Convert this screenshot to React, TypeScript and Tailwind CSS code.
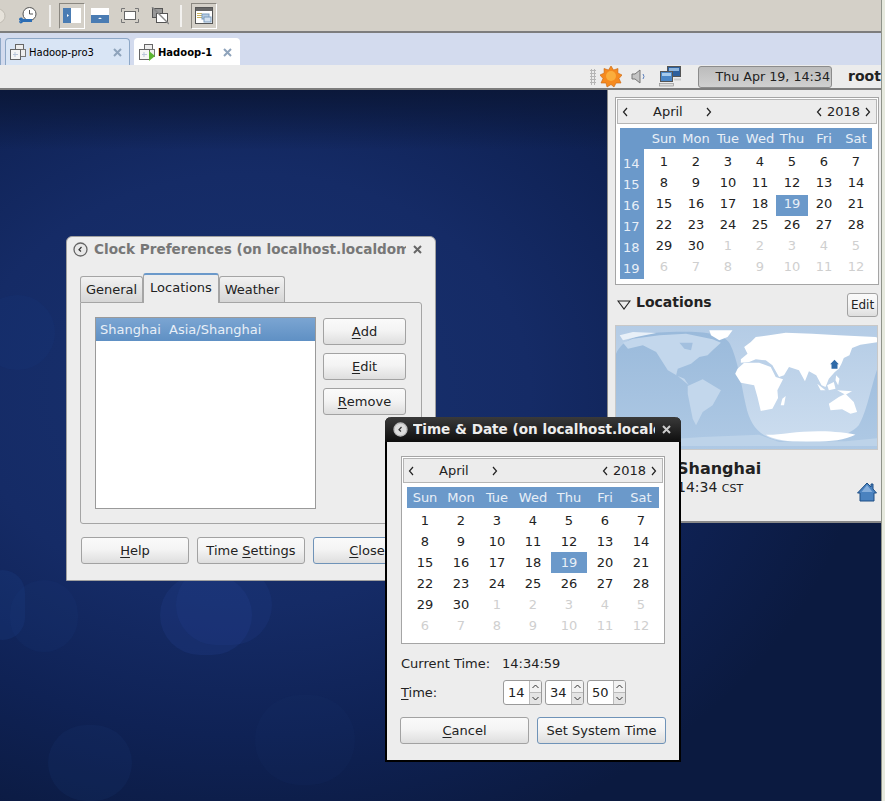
const F = "font-['DejaVu_Sans',sans-serif]";
const weeks = [
  [["1",0],["2",0],["3",0],["4",0],["5",0],["6",0],["7",0]],
  [["8",0],["9",0],["10",0],["11",0],["12",0],["13",0],["14",0]],
  [["15",0],["16",0],["17",0],["18",0],["19",2],["20",0],["21",0]],
  [["22",0],["23",0],["24",0],["25",0],["26",0],["27",0],["28",0]],
  [["29",0],["30",0],["1",1],["2",1],["3",1],["4",1],["5",1]],
  [["6",1],["7",1],["8",1],["9",1],["10",1],["11",1],["12",1]],
] as [string, number][][];
const days = ["Sun","Mon","Tue","Wed","Thu","Fri","Sat"];
const wk = ["14","15","16","17","18","19"];

function U({ children }: { children: string }) {
  return <span className="underline underline-offset-2">{children}</span>;
}

function Chev({ left }: { left?: boolean }) {
  return (
    <svg width="7" height="10" viewBox="0 0 7 10" className="shrink-0">
      <path d={left ? "M5 1 L1.5 5 L5 9" : "M2 1 L5.5 5 L2 9"} fill="none" stroke="#222" strokeWidth="1.2" />
    </svg>
  );
}

function CalHeader() {
  return (
    <div className="flex h-[25px] items-center border border-[#b5b5b5] bg-[#ececec] text-[13px] text-[#222]">
      <div className="ml-[4px]"><Chev left /></div>
      <span className="ml-[24px] w-[52px]">April</span>
      <Chev />
      <div className="ml-auto mr-[5px] flex items-center gap-[4px]">
        <Chev left />
        <span>2018</span>
        <Chev />
      </div>
    </div>
  );
}

function Calendar({ numbers }: { numbers?: boolean }) {
  const cell = numbers ? "w-[32px]" : "w-[36px]";
  return (
    <div className="border border-[#a5a5a5] bg-white p-px">
      <CalHeader />
      <div className={`flex flex-col pt-[4px] ${numbers ? "pl-[3px] pb-[4px]" : "pl-[4px] pb-[6px]"} text-[13px]`}>
        <div className={`flex h-[21px] items-center bg-[#6b99ca] text-[#e8eff7] ${numbers ? "w-[252px]" : "w-[252px]"}`}>
          {numbers && <div className="w-[28px]" />}
          {days.map((d) => <div key={d} className={`${cell} text-center`}>{d}</div>)}
        </div>
        {numbers ? <div className="h-[4px] w-[24px] bg-[#6b99ca]" /> : <div className="h-[2px]" />}
        {weeks.map((w, i) => (
          <div key={i} className="flex h-[21px] items-center">
            {numbers && (
              <div className="mr-[4px] flex h-full w-[24px] items-center bg-[#6b99ca] pl-[3px] text-[#e8eff7]">{wk[i]}</div>
            )}
            {w.map(([t, k], j) => (
              <div key={j} className={`${cell} flex h-full items-center justify-center ${numbers ? "pb-[4px]" : ""} ${k === 2 ? "bg-[#6b99ca] text-[#e8eff7]" : k === 1 ? "text-[#cfcfcf]" : "text-[#222]"}`}>{t}</div>
            ))}
          </div>
        ))}
      </div>
    </div>
  );
}

function Btn({ className = "", focus, small, children }: { className?: string; focus?: boolean; small?: boolean; children: React.ReactNode }) {
  return (
    <div className={`flex items-center justify-center rounded-[3px] border ${small ? "h-[24px] text-[12px]" : "h-[27px] text-[13px]"} ${focus ? "border-[#6f93b8]" : "border-[#a2a2a2]"} bg-[linear-gradient(#fafafa,#f4f4f4_45%,#dedede)] text-[#222] ${className}`}>
      {children}
    </div>
  );
}

function ClockGlyph({ dark, className = "" }: { dark?: boolean; className?: string }) {
  return (
    <svg width="15" height="15" viewBox="0 0 15 15" className={`shrink-0 ${className}`}>
      <circle cx="7.500" cy="7.500" r="6.500" fill={dark ? "#ddd" : "#e8e8e8"} stroke={dark ? "#bbb" : "#666"} strokeWidth="1.300" />
      <path d="M8.500 5 L6 7.800 L8 9.500" fill="none" stroke="#333" strokeWidth="1.200" />
    </svg>
  );
}

function ToolIcon({ kind }: { kind: string }) {
  if (kind === "left") return (
    <svg width="18" height="15" viewBox="0 0 18 15"><rect width="18" height="15" fill="#fff" /><rect width="8" height="15" fill="#4a7cb3" /><path d="M4 6 l2 1.500 -2 1.500z" fill="#fff" /></svg>
  );
  if (kind === "bottom") return (
    <svg width="18" height="15" viewBox="0 0 18 15"><rect width="18" height="15" fill="#fff" /><rect y="7" width="18" height="8" fill="#4a7cb3" /><path d="M7 11 h4 l-2 -1.500z" fill="#fff" /></svg>
  );
  if (kind === "full") return (
    <svg width="18" height="15" viewBox="0 0 18 15">
      <rect x="3.500" y="3.500" width="11" height="8" fill="#fff" stroke="#666" />
      <path d="M0.500 4 V0.500 H4 M14 0.500 H17.500 V4 M0.500 11 V14.500 H4 M14 14.500 H17.500 V11" fill="none" stroke="#777" />
    </svg>
  );
  if (kind === "off") return (
    <svg width="18" height="18" viewBox="0 0 18 18">
      <rect x="1.500" y="1.500" width="10" height="9" fill="#999" stroke="#555" />
      <rect x="5.500" y="6.500" width="11" height="9" fill="#fff" stroke="#555" />
      <path d="M1 0 L18 17" stroke="#888" strokeWidth="1.500" />
    </svg>
  );
  return (
    <svg width="18" height="17" viewBox="0 0 18 17">
      <rect x="0.500" y="0.500" width="17" height="16" fill="#fff" stroke="#555" />
      <rect x="1" y="1" width="16" height="3" fill="#666" />
      <rect x="2" y="6" width="5" height="1" fill="#c9b35e" /><rect x="2" y="8" width="5" height="1" fill="#c9b35e" /><rect x="2" y="10" width="5" height="1" fill="#c9b35e" />
      <rect x="7" y="7" width="7" height="5" fill="#b7cde3" stroke="#7a9bbd" /><rect x="9" y="10" width="7" height="5" fill="#d5e2ef" stroke="#7a9bbd" />
    </svg>
  );
}

function VmIcon({ run }: { run?: boolean }) {
  return (
    <svg width="17" height="17" viewBox="0 0 17 17">
      <rect x="5.500" y="0.500" width="8" height="8" fill="#eee" stroke="#666" />
      <rect x="9.500" y="5.500" width="6" height="7" fill="#eee" stroke="#777" />
      <rect x="0.500" y="5.500" width="10" height="10" fill="#f6f6f6" stroke="#666" />
      <path d="M5 8v5M3 10.500h5" stroke="#b9c6da" />
      {run && <path d="M10 7 L16 12 L10 17z" fill="#5cb531" />}
    </svg>
  );
}

function Close({ className = "" }: { className?: string }) {
  return (
    <svg width="9" height="9" viewBox="0 0 9 9" className={className}>
      <path d="M1 1 L8 8 M8 1 L1 8" stroke="#8ea3bb" strokeWidth="2" />
    </svg>
  );
}

function Tab({ active, label, w }: { active?: boolean; label: string; w: string }) {
  return (
    <div className={`flex h-[27px] items-center rounded-t-[4px] border border-b-0 ${w} ${active ? "border-[#fff] bg-white font-bold" : "border-[#8da7c6] bg-[#d9e5f5]"}`}>
      <div className="ml-[4px]"><VmIcon run={active} /></div>
      <span className="ml-[2px] text-[10px] text-black">{label}</span>
      <Close className="ml-auto mr-[7px]" />
    </div>
  );
}

function WorldMap() {
  return (
    <svg width="261" height="123" viewBox="9 12 786 369" preserveAspectRatio="none" className="block">
      <defs>
        <linearGradient id="day" x1="0" y1="0" x2="0" y2="1"><stop offset="0" stopColor="#b3cbe5" /><stop offset="1" stopColor="#cfdff0" /></linearGradient>
        <linearGradient id="night" x1="0" y1="0" x2="0" y2="1"><stop offset="0" stopColor="#9abadb" /><stop offset="1" stopColor="#b0cae5" /></linearGradient>
      </defs>
      <rect x="0" y="0" width="800" height="400" fill="url(#day)" />
      <path d="M9 400 V95 C30 50 80 32 170 30 C260 28 330 30 352 65 C375 110 385 180 400 250 C415 320 450 352 520 358 C600 364 700 355 740 310 C765 270 780 180 800 130 V400 Z" fill="url(#night)" />
      <path d="M170 352 L270 345 L440 338 L500 360 L700 358 L800 348 V372 H170Z" fill="#bdd3e9" />
      <path d="M30 62 L60 50 L140 40 L220 35 L300 52 L325 62 L300 85 L285 100 L260 105 L235 125 L195 140 L190 160 L215 170 L228 190 L195 162 L165 145 L130 90 L90 70 L45 80Z" fill="#c3d7ec" />
      <path d="M200 62 L240 62 L235 85 L215 80Z" fill="#a3c0df" />
      <path d="M225 192 L270 172 L325 205 L300 250 L270 270 L250 310 L240 290 L225 215Z" fill="#c3d7ec" />
      <path d="M290 25 H360 L345 45 L320 55 L295 40Z" fill="#fff" />
      <path d="M20 40 L60 30 L130 33 L70 45 L30 55Z" fill="#e8f0f8" />
      <path d="M385 112 L405 95 L395 75 L415 60 L430 45 L470 40 L520 32 L600 35 L680 40 L790 45 L800 48 V60 L745 68 L720 78 L712 100 L695 108 L688 125 L680 140 L668 150 L650 170 L640 195 L628 190 L612 160 L590 148 L578 178 L560 145 L530 135 L515 160 L500 165 L480 130 L460 115 L430 112 L410 120 L385 122Z" fill="#fff" />
      <path d="M375 140 L395 122 L440 122 L475 135 L490 165 L512 172 L495 205 L497 228 L480 260 L445 267 L435 225 L425 190 L385 182 L368 155Z" fill="#fff" />
      <path d="M650 245 L680 225 L700 215 L725 240 L735 270 L715 275 L690 262 L655 265Z" fill="#fff" />
      <path d="M645 190 L665 180 L670 200 L650 205Z M615 185 L640 205 L625 205Z M675 205 L720 208 L700 218Z M672 160 L682 170 L678 190 L670 175Z" fill="#fff" />
      <path d="M510 230 L520 222 L515 250 L505 250Z" fill="#fff" />
      <path d="M460 338 C500 340 560 325 640 328 C680 330 720 335 730 338 C690 358 640 360 560 358 C510 358 480 350 460 338Z" fill="#fff" />
      <path d="M667 113 L680 127 L676 127 L676 140 L658 140 L658 127 L654 127Z" fill="#2f6aa8" />
    </svg>
  );
}

function HomeIcon() {
  return (
    <svg width="20" height="20" viewBox="0 0 20 20">
      <path d="M10 1 L14 5 V2 H16 V7 L19.500 11 H17 V19 H3 V11 H0.500z" fill="#4a82bf" stroke="#1f4f85" strokeWidth="1" />
      <path d="M10 3 L4.500 10 H15.500z" fill="#86aedb" />
    </svg>
  );
}

function Spin({ v }: { v: string }) {
  return (
    <div className="flex h-[25px] w-[39px] items-center overflow-hidden rounded-[3px] border border-[#9a9a9a] bg-white text-[13px] text-[#222]">
      <span className="w-[25px] pl-[4px]">{v}</span>
      <div className="flex h-full flex-1 flex-col border-l border-[#bbb] bg-[#e4e4e4]">
        <div className="flex flex-1 items-center justify-center border-b border-[#bbb] bg-[#f2f2f2]">
          <svg width="7" height="5" viewBox="0 0 7 5"><path d="M0.500 4 L3.500 1 L6.500 4" fill="none" stroke="#333" /></svg>
        </div>
        <div className="flex flex-1 items-center justify-center">
          <svg width="7" height="5" viewBox="0 0 7 5"><path d="M0.500 1 L3.500 4 L6.500 1" fill="none" stroke="#333" /></svg>
        </div>
      </div>
    </div>
  );
}

function Bokeh({ c }: { c: string }) {
  return <div className={`absolute rounded-full ${c}`} />;
}

export default function App() {
  return (
    <div className={`relative flex h-[801px] w-[885px] flex-col overflow-hidden ${F}`}>
      {/* VMware toolbar */}
      <div className="flex h-[33px] shrink-0 items-center border-b-2 border-[#7d7d7d] bg-[#d4d0c8]">
        <svg width="6" height="16" viewBox="0 0 6 16" className="mr-[12px]"><circle cx="-2" cy="8" r="7" fill="#e6e2da" stroke="#bfbbb2" /></svg>
        <svg width="20" height="20" viewBox="0 0 20 20">
          <circle cx="11.500" cy="8" r="6.500" fill="#fff" stroke="#555" />
          <path d="M11.500 4 V8 H15" stroke="#555" fill="none" />
          <path d="M1 14 C1 11 4 11 5 13 H14 V16 H5 C4 18 1 18 1 15 L3 15.500z" fill="#2c6db4" />
        </svg>
        <div className="ml-[11px] mr-[8px] h-[22px] w-[2px] bg-white/70" />
        <div className="flex h-[26px] w-[26px] items-center justify-center border border-t-[#8a8780] border-l-[#8a8780] border-r-white border-b-white"><ToolIcon kind="left" /></div>
        <div className="flex w-[30px] items-center justify-center"><ToolIcon kind="bottom" /></div>
        <div className="flex w-[30px] items-center justify-center"><ToolIcon kind="full" /></div>
        <div className="flex w-[30px] items-center justify-center"><ToolIcon kind="off" /></div>
        <div className="ml-[5px] mr-[9px] h-[22px] w-[2px] bg-white/70" />
        <div className="flex h-[26px] w-[26px] items-center justify-center border border-t-[#8a8780] border-l-[#8a8780] border-r-white border-b-white"><ToolIcon kind="win" /></div>
      </div>
      {/* Tabs */}
      <div className="flex h-[32px] shrink-0 items-end gap-[4px] bg-[#d3dbee]">
        <div className="h-[27px] w-px border-r border-[#8da7c6]" />
        <Tab label="Hadoop-pro3" w="w-[125px]" />
        <Tab active label="Hadoop-1" w="w-[106px]" />
      </div>
      {/* Guest panel */}
      <div className="flex h-[25px] shrink-0 items-center border-b-2 border-[#7d7d7d] bg-[#ececec] pr-[6px] text-[#222]">
        <div className="ml-auto mr-[4px] h-[16px] w-[6px] bg-[radial-gradient(#b5b5b5_1px,transparent_1.200px)] bg-[length:3px_3px]" />
        <svg width="22" height="22" viewBox="0 0 22 22">
          <path d="M11 0 L13.500 4 L18 2.500 L17.800 7 L22 9 L19 12.500 L21 17 L16 17 L14 21 L11 18.500 L7 21 L6 17 L1 17 L3 12.500 L0 9 L4.200 7 L4 2.500 L8.500 4z" fill="#f58a1f" stroke="#c9630c" strokeWidth="0.600" />
          <circle cx="11" cy="10" r="5" fill="#fbae3c" />
        </svg>
        <svg width="16" height="17" viewBox="0 0 16 17" className="ml-[9px]">
          <path d="M1 6 H4 L9 2 V15 L4 11 H1z" fill="#c4c4c4" stroke="#777" />
          <path d="M12 6 Q14 8.500 12 11" fill="none" stroke="#5a7fbd" />
        </svg>
        <svg width="23" height="21" viewBox="0 0 23 21" className="ml-[12px]">
          <rect x="8.500" y="0.500" width="13" height="10" fill="#2d5f9c" stroke="#555" />
          <rect x="10" y="2" width="10" height="3" fill="#8db4dc" />
          <rect x="1.500" y="5.500" width="12" height="10" fill="#4a86c6" stroke="#555" />
          <rect x="3" y="7" width="9" height="3" fill="#a7cbec" />
          <rect x="0.500" y="17.500" width="14" height="2.500" fill="#ddd" stroke="#888" strokeWidth="0.600" />
          <rect x="15" y="12.500" width="7" height="2" fill="#ccc" />
        </svg>
        <div className="ml-[16px] flex h-[22px] w-[134px] shrink-0 items-center justify-end whitespace-nowrap rounded-[3px] border border-[#8c8c8c] bg-[linear-gradient(#bcbcbc,#d0d0d0)] pr-px text-[12.700px]">Thu Apr 19, 14:34</div>
        <span className="ml-[16px] w-[31px] text-[14px] font-bold">root</span>
      </div>

      {/* Desktop */}
      <div className="relative flex-1 overflow-hidden bg-[#0b1a40] bg-[radial-gradient(ellipse_620px_480px_at_250px_300px,#183270_0%,#152b66_45%,#0f2255_72%,#0b1a40_100%)]">
        <div className="absolute inset-x-0 top-0 h-[60px] bg-[linear-gradient(#0b183a,transparent)]" />
        <Bokeh c="left-[-20px] top-[480px] h-[70px] w-[45px] bg-[#1d3f88]/25" />
        <Bokeh c="left-[10px] top-[490px] h-[72px] w-[68px] bg-[#1d3a80]/15" />
        <Bokeh c="left-[160px] top-[485px] h-[80px] w-[92px] bg-[#23408f]/25" />
        <Bokeh c="left-[176px] top-[475px] h-[80px] w-[96px] bg-[#23408f]/20" />
        <Bokeh c="left-[48px] top-[635px] h-[76px] w-[84px] bg-[#1b3672]/20" />
        <Bokeh c="left-[255px] top-[605px] h-[90px] w-[100px] bg-[#1b3672]/10" />
        <Bokeh c="left-[-20px] top-[205px] h-[75px] w-[75px] bg-[#1d3f88]/15" />

        {/* Right clock panel */}
        <div className="absolute left-[607px] top-0 h-[433px] w-[274px] border-l border-b-2 border-[#8a8a8a] bg-[#ececec] pl-[7px] pr-[2px] pt-[7px]">
          <Calendar numbers />
          <div className="mt-[8px] flex h-[24px] items-center">
            <svg width="14" height="10" viewBox="0 0 14 10" className="ml-[2px]"><path d="M1 1 H13 L7 9z" fill="none" stroke="#222" strokeWidth="1.100" /></svg>
            <span className="ml-[5px] mb-[6px] text-[14px] font-bold text-[#222]">Locations</span>
            <Btn small className="ml-auto mr-[1px] w-[31px]">Edit</Btn>
          </div>
          <div className="mt-[8px] w-[263px] border border-[#c8c8c8]"><WorldMap /></div>
          <div className="relative mt-[9px] h-[60px] w-[262px] pl-[62px] text-[#222]">
            <div className="text-[16px] leading-[20px] font-bold">Shanghai</div>
            <div className="text-[14px] leading-[16px]">14:34 <span className="text-[11px]">CST</span></div>
            <div className="absolute right-0 top-[23px]"><HomeIcon /></div>
          </div>
        </div>

        {/* Clock Preferences */}
        <div className="absolute left-[66px] top-[146px] flex h-[345px] w-[370px] flex-col rounded-t-[6px] border border-[#a0a0a0] bg-[#ededed] px-[13px]">
          <div className="flex h-[24px] items-center pt-[1px]">
            <ClockGlyph className="ml-[-7px]" />
            <span className="ml-[6px] w-[316px] overflow-hidden whitespace-nowrap text-[13.600px] font-bold text-[#777]">Clock Preferences (on localhost.localdoma</span>
            <svg width="9" height="9" viewBox="0 0 9 9" className="ml-[7px] shrink-0"><path d="M1 1 L8 8 M8 1 L1 8" stroke="#666" strokeWidth="2" /></svg>
          </div>
          <div className="mt-[11px] flex h-[30px] items-end text-[13px] text-[#222]">
            <div className="flex h-[26px] w-[63px] items-center justify-center rounded-t-[3px] border border-b-0 border-[#a5a5a5] bg-[linear-gradient(#f2f2f2,#d6d6d6)]">General</div>
            <div className="relative z-10 mb-[-1px] flex h-[30px] w-[76px] items-start justify-center rounded-t-[3px] border-x border-t-2 border-x-[#a5a5a5] border-t-[#6b99ca] bg-[#ededed] pt-[3px]">Locations</div>
            <div className="flex h-[26px] w-[66px] items-center justify-center rounded-t-[3px] border border-b-0 border-[#a5a5a5] bg-[linear-gradient(#f2f2f2,#d6d6d6)]">Weather</div>
          </div>
          <div className="flex h-[222px] gap-[7px] rounded-b-[3px] rounded-tr-[3px] border border-[#a5a5a5] p-[14px]">
            <div className="h-[192px] w-[221px] border border-[#9a9a9a] bg-white">
              <div className="flex h-[23px] items-center bg-[linear-gradient(#7ba5d2,#5f90c4)] pl-[4px] text-[13px] whitespace-pre text-[#e8eff7]">Shanghai  Asia/Shanghai</div>
            </div>
            <div className="flex flex-col gap-[8px] pt-[1px]">
              <Btn className="w-[83px]"><U>A</U>dd</Btn>
              <Btn className="w-[83px]"><U>E</U>dit</Btn>
              <Btn className="w-[83px]"><U>R</U>emove</Btn>
            </div>
          </div>
          <div className="ml-px mt-[13px] flex gap-[8px]">
            <Btn className="w-[108px]"><U>H</U>elp</Btn>
            <Btn className="w-[108px]">Time&nbsp;<U>S</U>ettings</Btn>
            <Btn focus className="w-[108px]"><U>C</U>lose</Btn>
          </div>
        </div>

        {/* Time & Date */}
        <div className="absolute left-[385px] top-[327px] flex h-[345px] w-[296px] flex-col rounded-t-[6px] border-2 border-t-0 border-black bg-[#ededed]">
          <div className="mx-[-2px] flex h-[25px] items-center rounded-t-[6px] bg-[linear-gradient(#3a3a3a,#0e0e0e)] pl-[8px]">
            <ClockGlyph dark />
            <span className="ml-[5px] w-[242px] overflow-hidden whitespace-nowrap text-[13.600px] font-bold text-[#ededed]">Time &amp; Date (on localhost.localdo</span>
            <svg width="9" height="9" viewBox="0 0 9 9" className="ml-[7px] shrink-0"><path d="M1 1 L8 8 M8 1 L1 8" stroke="#ccc" strokeWidth="2" /></svg>
          </div>
          <div className="mx-[14px] mt-[14px]">
            <Calendar />
          </div>
          <div className="mx-[14px] mt-[11px] flex h-[18px] items-center text-[13px] text-[#222]">
            <span className="w-[101px]">Current Time:</span><span>14:34:59</span>
          </div>
          <div className="mx-[14px] mt-[7px] flex h-[25px] items-center text-[13px] text-[#222]">
            <span className="w-[102px]"><U>T</U>ime:</span>
            <div className="flex gap-[3px]"><Spin v="14" /><Spin v="34" /><Spin v="50" /></div>
          </div>
          <div className="mx-[13px] mt-[12px] flex gap-[8px]">
            <Btn className="w-[129px]"><U>C</U>ancel</Btn>
            <Btn focus className="w-[129px]">Set System Time</Btn>
          </div>
        </div>
      </div>
      <div className="absolute right-0 top-0 h-[801px] w-[4px] border-l border-[#8f938a] bg-[#e6e9de]" />
    </div>
  );
}
